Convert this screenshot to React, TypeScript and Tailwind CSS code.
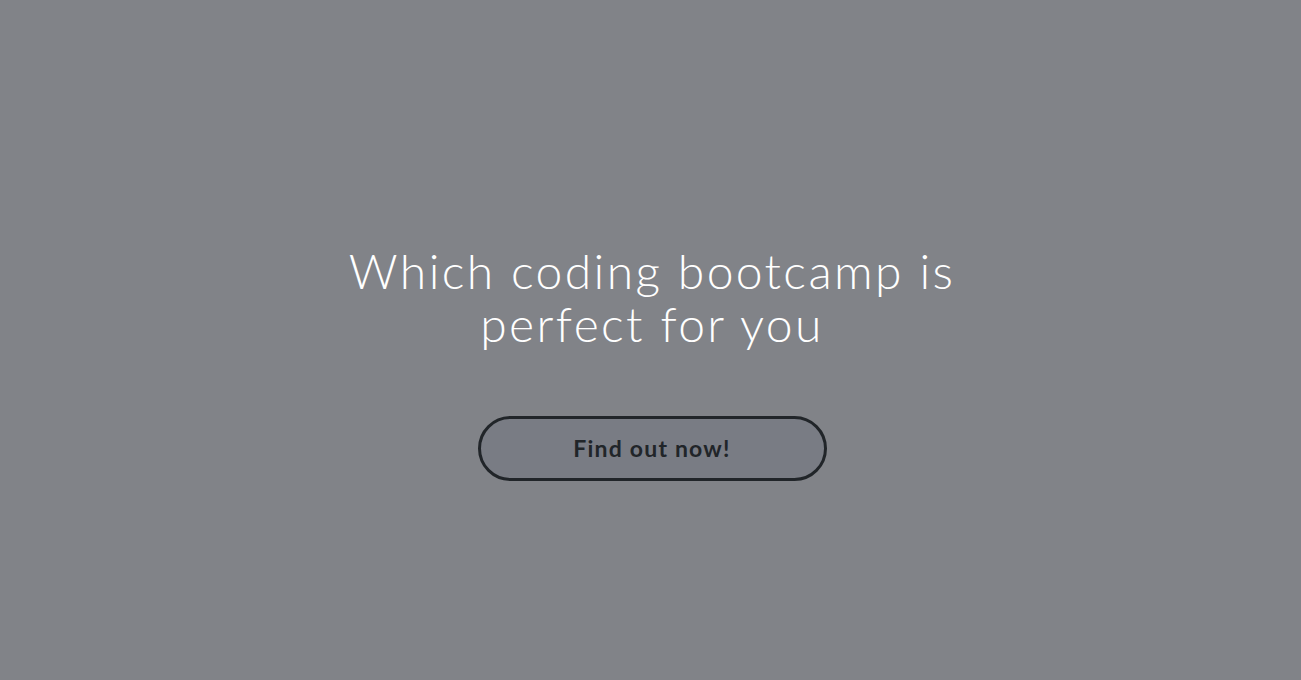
export default function App() {
  return (
    <div className="min-h-[680px] w-full bg-[#818388] pl-[3px] flex flex-col items-center justify-center font-['Lato','Open_Sans',sans-serif]">
      <h1 className="mt-[44px] w-[660px] text-center text-white text-[48px] font-light leading-[53px] tracking-[2.4px]">
        Which coding bootcamp is perfect for you
      </h1>
      <button className="mt-[66px] w-[349px] h-[65px] rounded-full border-[3px] border-[#212529] bg-[#797c84] text-[#212529] text-[23px] font-bold tracking-[1.2px]">
        Find out now!
      </button>
    </div>
  );
}
